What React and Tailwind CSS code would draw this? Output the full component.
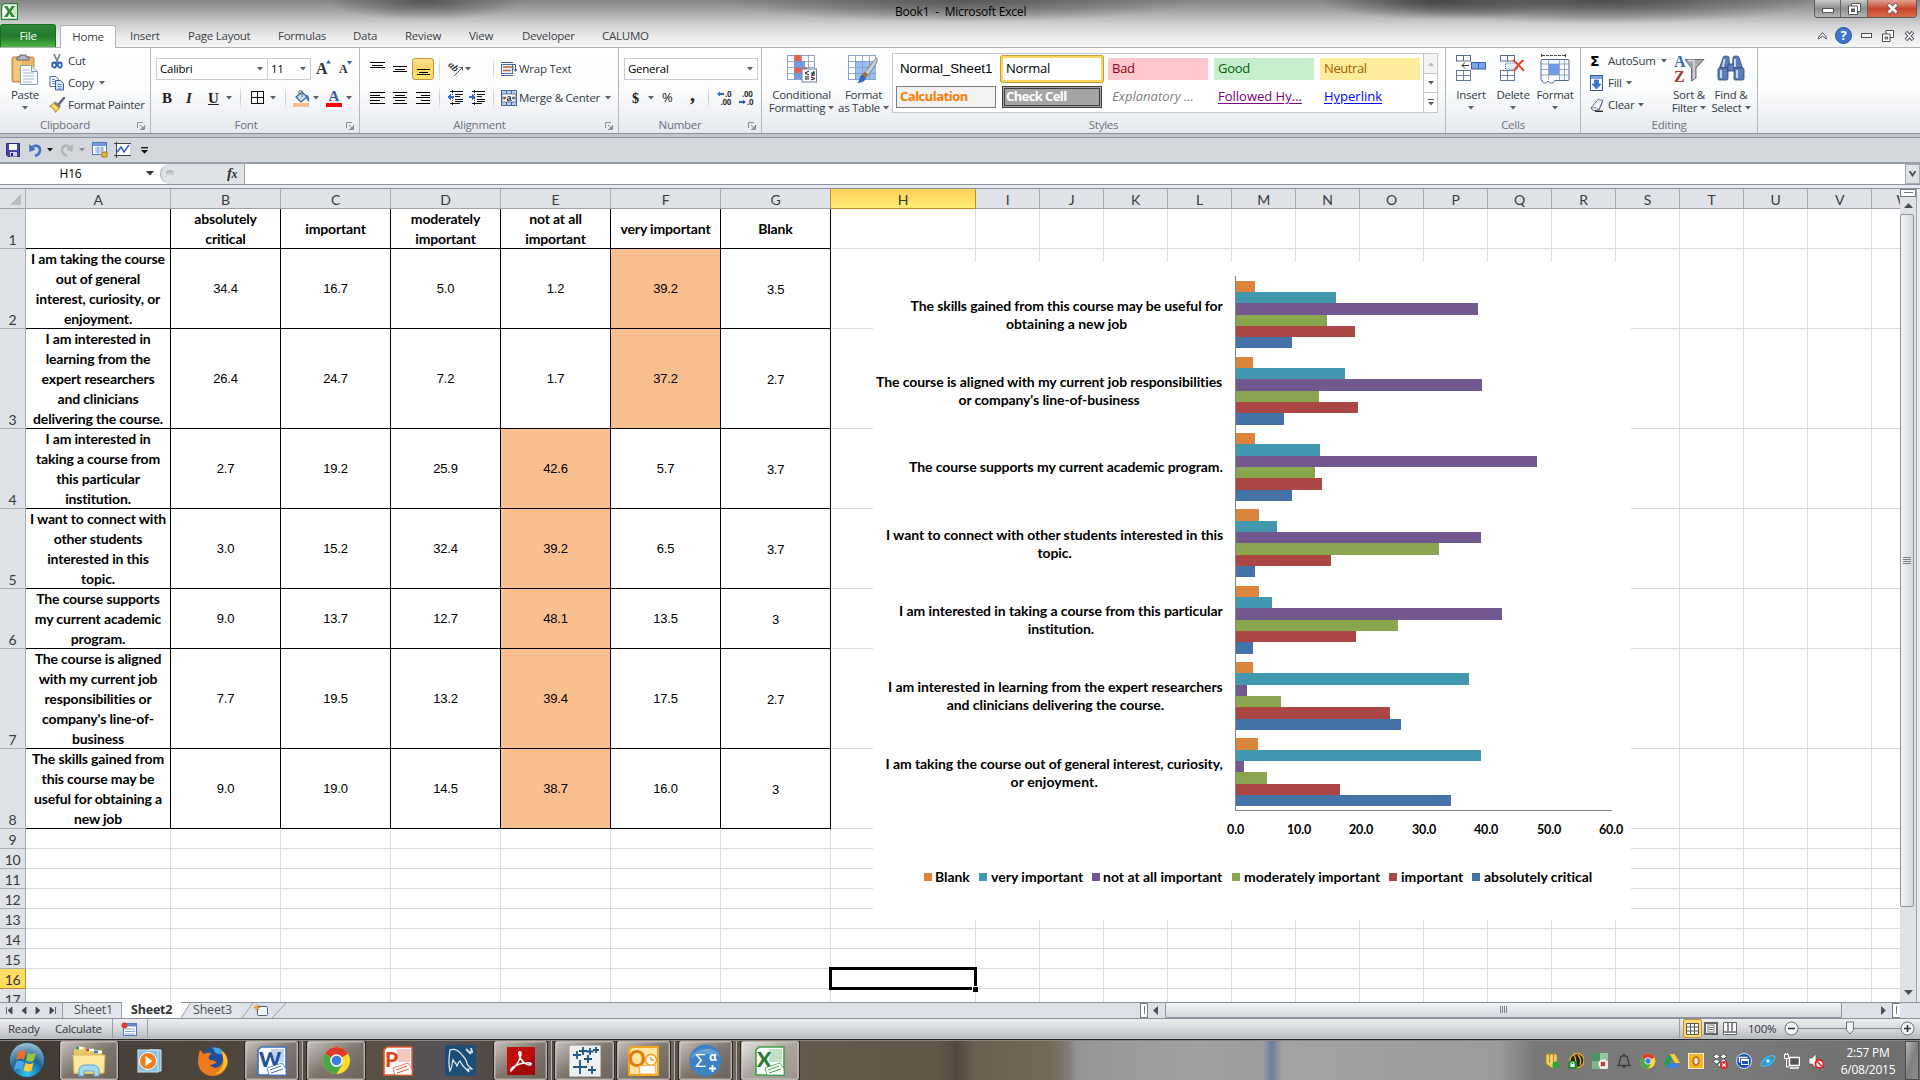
import React from "react";

const UI = "font-['Open_Sans','Noto_Sans',sans-serif] text-[11.5px] tracking-[-0.25px]";
const CAL = "font-['Lato',sans-serif]";

const Arrow = ({ c = "" }) => (
  <svg className={"w-[6px] h-[4px] shrink-0 " + c} viewBox="0 0 6 4"><path d="M0 0h6L3 3.600z" fill="#5b6068" /></svg>
);
const Sep = ({ c = "" }) => <div className={"w-px h-[22px] shrink-0 bg-gradient-to-b from-[#f0f1f3] via-[#c4c8ce] to-[#f0f1f3] " + c} />;

/* horizontal rules icon; each entry is [offset, width] */
const Lines = ({ rows, y = 0, c = "" }) => (
  <svg className={"w-[15px] h-[16px] shrink-0 " + c} viewBox="0 0 15 16" shapeRendering="crispEdges">
    {rows.map(([x, w], i) => <rect key={i} x={x} y={Math.round(y + i * 2.700)} width={w} height="1" fill="#000" />)}
  </svg>
);

const Launcher = () => (
  <svg className="w-[8px] h-[8px]" viewBox="0 0 8 8"><path d="M.5 6V.5H6M3 3l3 3M7.500 3v4.500H3" fill="none" stroke="#8a8f97" /><path d="M7.500 3.500v4h-4z" fill="#8a8f97" /></svg>
);

const Group = ({ label, w, children, launch, lp = "" }) => (
  <div className={"flex flex-col h-[85px] shrink-0 border-r border-[#b4b8be] bg-gradient-to-b from-white via-[#fbfcfc] to-[#e6e9ee] " + w}>
    <div className="h-[69px] flex flex-col">{children}</div>
    <div className={"h-[16px] relative flex items-center justify-center text-[#6b7280] " + lp}>
      <span>{label}</span>
      {launch && <span className="absolute right-[5px] top-[5px]"><Launcher /></span>}
    </div>
  </div>
);

const Big = ({ w, icon, a, b, arrow }) => (
  <div className={"flex flex-col items-center shrink-0 pt-[6px] text-[#333b46] leading-[13px] whitespace-nowrap " + w}>
    <div className="h-[34px] flex items-start justify-center">{icon}</div>
    <span>{a}</span>
    <span className="flex items-center gap-[3px] h-[13px]">{b}{arrow !== false && <Arrow />}</span>
  </div>
);

const PasteIcon = () => (
  <svg className="w-[30px] h-[31px]" viewBox="0 0 30 31">
    <rect x="2" y="3" width="22" height="25" rx="1.500" fill="#eab765" stroke="#b9853b" />
    <rect x="4" y="6" width="8" height="20" fill="#f6d08f" opacity=".7" />
    <path d="M7 6V3h3V1h6v2h3v3z" fill="#b5bac2" stroke="#5f666f" />
    <path d="M10.500 11.500h11l6 6v13h-17z" fill="#fdfeff" stroke="#8b9cb6" />
    <path d="M21.500 11.500v6h6" fill="#dfe8f4" stroke="#8b9cb6" />
    <path d="M13 16h6M13 19h11M13 22h11M13 25h11M13 28h9" stroke="#9db4d4" />
  </svg>
);
const CutIcon = () => (
  <svg className="w-[16px] h-[16px]" viewBox="0 0 16 16">
    <path d="M5 1l4 9M11 1L7 10" stroke="#72839b" strokeWidth="1.700" />
    <ellipse cx="5.200" cy="12" rx="2" ry="2.500" fill="none" stroke="#2f62b5" strokeWidth="1.800" />
    <ellipse cx="10.800" cy="12" rx="2" ry="2.500" fill="none" stroke="#2f62b5" strokeWidth="1.800" />
  </svg>
);
const CopyIcon = () => (
  <svg className="w-[16px] h-[16px]" viewBox="0 0 16 16">
    <path d="M1 1.500h6l2.500 2.500v7.500H1z" fill="#f4f8ff" stroke="#4c72b0" />
    <path d="M6.500 5.500h5l3 3v6.500h-8z" fill="#d6e4f8" stroke="#3559a0" />
    <path d="M3 4.500h3M3 6.500h3M3 8.500h3M8.500 9.500h4M8.500 11.500h4M8.500 13.200h4" stroke="#5c86c8" strokeWidth=".9" />
  </svg>
);
const PainterIcon = () => (
  <svg className="w-[16px] h-[16px]" viewBox="0 0 16 16">
    <path d="M15 1l-5 6" stroke="#6a5d8c" strokeWidth="2.600" strokeLinecap="round" />
    <path d="M6.500 4.500l5.500 5-1.500 1.500-6-5z" fill="#777c85" />
    <path d="M4.500 6l6 5-4 4.500C5 12.500 3 10 .5 9.500z" fill="#f2c443" stroke="#a77f20" strokeWidth=".7" />
    <path d="M4 8l4 4" stroke="#fff3b8" strokeWidth="1.200" />
  </svg>
);
const BucketIcon = () => (
  <svg className="w-[17px] h-[17px]" viewBox="0 0 17 17">
    <path d="M3 7l6-5 5 5-6 5z" fill="#c9daf2" stroke="#3f5f91" strokeWidth="1.200" /><path d="M6 4V1.500c0-1.500 3-1.500 3 0V7" fill="none" stroke="#3f5f91" />
    <path d="M13 4.500c3 1 3.500 4 3 7.500-1.500-1-2.500-3-3-4.500z" fill="#3c6fc4" /><rect x="0" y="13" width="16" height="4" fill="#fabf8f" />
  </svg>
);
const FontColor = () => (
  <div className="w-[16px] h-[17px] flex flex-col items-center leading-[13px] font-['Liberation_Serif',serif] font-bold text-[15px] text-[#3d5a94] tracking-normal">
    A<div className="w-full h-[4px] bg-[#ff0000] shrink-0" />
  </div>
);
const BorderIcon = () => (
  <svg className="w-[14px] h-[14px]" viewBox="0 0 14 14" shapeRendering="crispEdges"><path d="M.5.5h12v12H.5zM6.500 0v13M0 6.500h13" fill="none" stroke="#111" /></svg>
);
const WrapIcon = () => (
  <svg className="w-[16px] h-[16px]" viewBox="0 0 16 16">
    <path d="M0 1.500h12M0 14.500h12" stroke="#3d62a3" /><rect x=".5" y="3.500" width="11" height="9" fill="#eef4fc" stroke="#4a6eab" />
    <path d="M2 6h11M2 9.500h8" stroke="#b0663a" strokeWidth="1.300" /><path d="M12 3.500h2.500v6m-2-1.500l2 2.500 1.500-2.500" fill="none" stroke="#2f5ea8" />
  </svg>
);
const MergeIcon = () => (
  <svg className="w-[16px] h-[16px]" viewBox="0 0 16 16">
    <rect x=".5" y=".5" width="15" height="15" fill="#b9cdec" stroke="#46639a" /><path d="M5.500 0v4M10.500 0v4M5.500 12v4M10.500 12v4" stroke="#46639a" />
    <rect x="1" y="4" width="14" height="8" fill="#fff" stroke="#46639a" strokeWidth=".8" />
    <path d="M1.500 8h3M11.500 8h3M3 6.500L4.500 8 3 9.500M13 6.500L11.500 8 13 9.500" stroke="#222" fill="none" />
    <text x="5.400" y="10.700" fontSize="9" fontWeight="bold" fontFamily="Liberation Sans" fill="#222">a</text>
  </svg>
);
const OrientIcon = () => (
  <svg className="w-[16px] h-[16px] overflow-visible" viewBox="0 0 16 16">
    <text x="0" y="8" transform="rotate(45 4 6)" fontSize="10" letterSpacing="0" fontStyle="italic" fontFamily="Liberation Serif" fontWeight="bold" fill="#333">ab</text>
    <path d="M6 15L14.500 6.500M11.500 6.500h3v3" stroke="#555" fill="none" />
  </svg>
);
const Indent = ({ left, c }) => (
  <svg className={"w-[16px] h-[16px] shrink-0 " + c} viewBox="0 0 16 16" shapeRendering="crispEdges">
    {[1, 4, 6, 9, 11].map((y) => <rect key={y} x={y === 1 ? 3 : 8} y={y} width={y === 1 ? 13 : y === 6 ? 5 : 8} height="1" fill="#111" />)}
    <rect x="3" y="13" width="10" height="1" fill="#111" /><path d="M5.500 0v16" stroke="#333" strokeDasharray="1 1" />
    <path d={left ? "M0 7l4-3v2h3v2H4v2z" : "M7 7L3 4v2H0v2h3v2z"} fill="#2f6fc9" />
  </svg>
);
const DecIcon = ({ inc, c }) => (
  <svg className={"w-[16px] h-[16px] shrink-0 " + c} viewBox="0 0 16 16">
    <g fontFamily="Open Sans" fontWeight="bold" fontSize="8" fill="#333">
      {inc ? <><text x="8" y="7">.0</text><text x="3.500" y="14.500">.00</text></> : <><text x="3" y="7">.00</text><text x="8" y="14.500">.0</text></>}
    </g>
    <path d={inc ? "M0 4l3-2.500V3h4v2H3v1.500z" : "M7 12L4 9.500V11H0v2h4v1.500z"} fill="#2f62c4" />
  </svg>
);
const CFIcon = () => (
  <svg className="w-[30px] h-[29px]" viewBox="0 0 30 29">
    <rect x=".5" y="1.500" width="27" height="24" fill="#fff" stroke="#8da3c8" />
    <rect x="7" y="1" width="7" height="6" fill="#ef5b41" /><rect x="7" y="7" width="11" height="6" fill="#6e9ae8" /><rect x="7" y="13" width="13" height="6" fill="#ef5b41" /><rect x="7" y="19" width="7" height="6" fill="#6e9ae8" />
    <path d="M7.500 1v25M14.500 1v25M21.500 1v25M0 7.500h28M0 13.500h28M0 19.500h28" stroke="#7f95bd" strokeWidth=".8" />
    <rect x="15" y="15" width="14.500" height="13" fill="#fff" stroke="#6b7f9f" />
    <path d="M22 17l-4 2 4 2M18 23h4M18 25h4M24 19h4M24 21h4M27 17l-2 5M24 23l4 1.500-4 1.500" stroke="#111" fill="none" />
  </svg>
);
const FTIcon = () => (
  <svg className="w-[31px] h-[30px]" viewBox="0 0 31 30">
    <rect x=".5" y="1.500" width="27" height="24" fill="#fff" stroke="#8da3c8" /><rect x="7" y="7" width="21" height="18" fill="#9dbdf0" />
    <path d="M7.500 1v25M14.500 1v25M21.500 1v25M0 7.500h28M0 13.500h28M0 19.500h28" stroke="#7c98cb" strokeWidth=".8" />
    <path d="M29 4c2 3-6 14-9 17l-3-3c4-4 9-13 12-14z" fill="#c9ccd1" stroke="#70757d" strokeWidth=".8" />
    <path d="M17 18l3 3-2 3-4-3.500z" fill="#a86b2a" /><path d="M14 20.500l4 3.500c-1 4-6 5-9 5 3-2 2-6 5-8.500z" fill="#2f66c8" />
  </svg>
);
const Cell2 = ({ x, y, w = 14, h = 12 }) => (
  <g><rect x={x} y={y} width={w} height={h} fill="#fff" stroke="#566b8e" strokeWidth=".9" /><path d={`M${x + w / 2} ${y}v${h}M${x} ${y + h / 2}h${w}`} stroke="#566b8e" strokeWidth=".8" /></g>
);
const InsertIcon = () => (
  <svg className="w-[31px] h-[29px]" viewBox="0 0 31 29"><rect x=".5" y="1.500" width="14" height="5.500" fill="#fff" stroke="#566b8e" /><path d="M7.500 1.500v5.500" stroke="#566b8e" />
    <Cell2 x={0.5} y={16.500} w={14} h={10} /><rect x="15.500" y="8.500" width="14" height="6.500" fill="#7ba4ea" stroke="#3b5fa8" /><path d="M22.500 8.500v6.500" stroke="#3b5fa8" />
    <path d="M6 11.500h7M9 8.500l-3 3 3 3" stroke="#333" fill="none" /></svg>
);
const DeleteIcon = () => (
  <svg className="w-[26px] h-[29px]" viewBox="0 0 26 29"><rect x=".5" y="1.500" width="14" height="5.500" fill="#fff" stroke="#566b8e" /><path d="M7.500 1.500v5.500" stroke="#566b8e" />
    <Cell2 x={0.5} y={16.500} w={14} h={10} /><rect x="5.500" y="9" width="12" height="6" fill="#e8f0fc" stroke="#3b5fa8" strokeDasharray="1 1" />
    <path d="M13 6c4 3 8 7 11 11M23.500 6c-4 3-7 7-9.500 11" stroke="#ee3a22" strokeWidth="2" fill="none" /></svg>
);
const FormatIcon = () => (
  <svg className="w-[31px] h-[31px]" viewBox="0 0 31 31"><path d="M2 1.500h23M1.500 0v3M25.500 0v3" stroke="#444" strokeDasharray="3 1" />
    <rect x="1" y="5.500" width="28" height="21" rx="1" fill="#f7faff" stroke="#566b8e" /><rect x="9" y="10" width="10" height="11" fill="#6f9bea" />
    <path d="M8.500 5v21M19.500 5v21M24.500 5v21M1 10h28M1 15.500h28M1 21h28" stroke="#8197ba" strokeWidth=".8" /><path d="M2 26c0 4 5 4 6 1 1 3 7 3 7-1" fill="#fff" stroke="#566b8e" /></svg>
);
const SortIcon = () => (
  <svg className="w-[31px] h-[30px]" viewBox="0 0 31 30">
    <text x="0" y="13" fontFamily="Liberation Serif" fontWeight="bold" fontSize="16" fill="#3a66b3">A</text>
    <text x="0" y="28" fontFamily="Liberation Serif" fontWeight="bold" fontSize="16" fill="#a33a35">Z</text>
    <path d="M11 5.500h19l-8 8.500v10l-4.500 3V14z" fill="#a4a7ab" stroke="#6d7176" /><path d="M14 6.500h6l0 8v10" stroke="#dcdee0" fill="none" strokeWidth="1.500" />
  </svg>
);
const FindIcon = () => (
  <svg className="w-[28px] h-[29px]" viewBox="0 0 28 29">
    <g fill="#5d7fb8" stroke="#2c4876" strokeWidth=".8">
      <path d="M6 3.500c0-2 6-2 6 0l.5 10.500H2.500z" /><path d="M16 3.500c0-2 6-2 6 0L25.500 14h-10z" />
      <rect x="1" y="14" width="10" height="12" rx="1.500" /><rect x="17" y="14" width="10" height="12" rx="1.500" /><rect x="11" y="10" width="6" height="7" />
    </g>
    <path d="M7.500 5L6 13M18 5v8M4 16v8M20 16v8" stroke="#c8d9f3" strokeWidth="2" />
  </svg>
);
const FillIcon = () => (
  <svg className="w-[13px] h-[16px]" viewBox="0 0 13 16"><rect x=".5" y=".5" width="12" height="15" fill="#fff" stroke="#3c5a96" /><rect x="1" y="1" width="11" height="3" fill="#7ba4ea" /><path d="M4.500 5h4v4h2.500l-4.500 5L2 9h2.500z" fill="#3b74d6" stroke="#2450a0" strokeWidth=".6" /></svg>
);
const ClearIcon = () => (
  <svg className="w-[14px] h-[14px]" viewBox="0 0 14 14"><path d="M8 1.500l5 1-4 9.500-6 .5-2-2.500z" fill="#f4f6fa" stroke="#5d6b85" /><path d="M1 10l5-.5 2.500 2.500L13 2.500" stroke="#5d6b85" fill="none" strokeWidth=".8" /><path d="M5 13.300h8" stroke="#222" strokeWidth="1.300" /></svg>
);

function TitleBar() {
  return (
    <div className="h-[24px] flex items-start">
      <svg className="w-[17px] h-[17px] mt-[3px] ml-px" viewBox="0 0 17 17">
        <path d="M3 .5h13.500v16H.5V3z" fill="#f3f9f1" stroke="#2a7d35" strokeWidth="1.300" /><rect x="10" y="3" width="5" height="11" fill="#cfe6cb" />
        <path d="M3 3h3.500l2 3.500L10.500 3H14l-4 5.500L14 14h-3.500L8.500 10.500 6.500 14H3l3.800-5.500z" fill="#2c8a3a" />
      </svg>
      <div className="mt-[3px] ml-[877px] flex-1 leading-[18px] text-[12px] tracking-[-0.2px] text-black whitespace-pre">Book1  -  Microsoft Excel</div>
      <div className="flex w-[103px] h-[18px] mr-[3px] border border-t-0 border-[#5a5a5a] rounded-b-[4px] overflow-hidden">
        <div className="w-[26px] bg-gradient-to-b from-[#c9c9c9] via-[#8e8e8e] to-[#b5b5b5] border-r border-[#636363] flex items-end justify-center pb-[4px]"><div className="w-[12px] h-[5px] bg-white border border-[#555]" /></div>
        <div className="w-[27px] bg-gradient-to-b from-[#c9c9c9] via-[#8e8e8e] to-[#b5b5b5] border-r border-[#636363] flex items-center justify-center">
          <svg className="w-[13px] h-[12px]" viewBox="0 0 13 12"><path d="M3.500.5h9v8h-9z" fill="#fff" stroke="#555" /><path d="M.5 3h9v8.500h-9z" fill="#fff" stroke="#555" /><rect x="3.500" y="6" width="3" height="2.500" fill="#777" stroke="#555" /></svg>
        </div>
        <div className="flex-1 bg-gradient-to-b from-[#e0a193] via-[#c8432a] to-[#d9694a] flex items-center justify-center">
          <svg className="w-[13px] h-[11px]" viewBox="0 0 13 11"><path d="M2 1l9 9M11 1l-9 9" stroke="#555" strokeWidth="4" /><path d="M2.500 1.500l8 8M10.500 1.500l-8 8" stroke="#fff" strokeWidth="2.600" /></svg>
        </div>
      </div>
    </div>
  );
}

function TabBar() {
  return (
    <div className="h-[24px] flex items-end text-[#3b3f45] border-b border-[#b0b3b8]">
      <div className="w-[56px] h-[23px] rounded-t-[3px] border border-b-0 border-[#1d6a2a] bg-gradient-to-b from-[#2d8a36] via-[#1f7a2c] to-[#4fb344] text-white flex items-center justify-center">File</div>
      <div className="w-[56px] h-[23px] ml-[4px] -mb-px rounded-t-[3px] border border-b-0 border-[#b0b3b8] bg-white flex items-center justify-center">Home</div>
      <div className="flex h-[23px] items-center ml-[14px] whitespace-nowrap flex-1">
        <span className="w-[58px]">Insert</span><span className="w-[90px]">Page Layout</span><span className="w-[75px]">Formulas</span><span className="w-[52px]">Data</span>
        <span className="w-[64px]">Review</span><span className="w-[53px]">View</span><span className="w-[80px]">Developer</span><span>CALUMO</span>
      </div>
      <div className="flex items-center h-[23px] gap-[8px] pr-[5px]">
        <svg className="w-[9px] h-[8px]" viewBox="0 0 9 8"><path d="M4.500 0.700L8.300 5v2L4.500 4 .7 7V5z" fill="#fff" stroke="#4a4f57" /></svg>
        <svg className="w-[17px] h-[17px]" viewBox="0 0 17 17"><circle cx="8.500" cy="8.500" r="8" fill="#3f74cc" stroke="#2a539c" /><text x="8.500" y="13" textAnchor="middle" fontSize="13" fontWeight="bold" fontFamily="Open Sans" fill="#fff">?</text></svg>
        <div className="w-[11px] h-[5px] bg-white border border-[#4a4f57] ml-px" />
        <svg className="w-[12px] h-[12px] ml-[2px]" viewBox="0 0 12 12"><path d="M4 .5h7.500v7H4z" fill="#fff" stroke="#4a4f57" /><path d="M.5 4H8v7.500H.5z" fill="#fff" stroke="#4a4f57" /><path d="M3 7h2.500v2H3z" stroke="#4a4f57" fill="none" /></svg>
        <svg className="w-[11px] h-[10px] ml-[2px]" viewBox="0 0 11 10"><path d="M2 1l7 8M9 1L2 9" stroke="#4a4f57" strokeWidth="3.600" /><path d="M2.400 1.500l6.200 7M8.600 1.500l-6.200 7" stroke="#fff" strokeWidth="1.600" /></svg>
      </div>
    </div>
  );
}

function Ribbon() {
  return (
    <div className="h-[85px] flex bg-gradient-to-b from-white via-[#fbfcfc] to-[#e6e9ee] text-[#333b46]">
      <Group label="Clipboard" w="w-[151px]" lp="pr-[20px]" launch>
        <div className="flex">
          <Big w="w-[50px]" icon={<PasteIcon />} a="Paste" b="" />
          <div className="flex flex-col pt-[2px] -ml-px">
            <div className="h-[22px] flex items-center gap-[3px]"><CutIcon /><span>Cut</span></div>
            <div className="h-[22px] flex items-center gap-[3px]"><CopyIcon /><span>Copy</span><Arrow c="ml-[2px]" /></div>
            <div className="h-[22px] flex items-center gap-[3px] whitespace-nowrap"><PainterIcon /><span>Format Painter</span></div>
          </div>
        </div>
      </Group>
      <Group label="Font" w="w-[209px]" lp="pr-[18px]" launch>
        <div className="flex items-center mt-[10px] h-[22px] ml-[5px] text-black">
          <div className="w-[112px] h-[22px] border border-[#c9cdd3] bg-white flex items-center justify-between pl-[3px] pr-[4px]">Calibri<Arrow /></div>
          <div className="w-[43px] h-[22px] border border-l-0 border-[#c9cdd3] bg-white flex items-center justify-between pl-[3px] pr-[4px]">11<Arrow /></div>
          <span className="ml-[5px] w-[14px] flex text-[#333] font-['Liberation_Serif',serif] font-bold text-[16px] tracking-normal leading-[22px]">A<svg className="w-[5px] h-[4px] mt-[2px] -ml-[2px] shrink-0" viewBox="0 0 5 4"><path d="M0 3.500L2.500 0 5 3.500z" fill="#2f5ea8" /></svg></span>
          <span className="ml-[9px] w-[14px] flex text-[#333] font-['Liberation_Serif',serif] font-bold text-[12px] tracking-normal leading-[26px]">A<svg className="w-[5px] h-[4px] mt-[5px] -ml-px shrink-0" viewBox="0 0 5 4"><path d="M0 0h5L2.500 3.500z" fill="#2f5ea8" /></svg></span>
        </div>
        <div className="flex items-center mt-[7px] h-[22px] text-[#222] font-['Liberation_Serif',serif] text-[15px] tracking-normal">
          <b className="ml-[11px] w-[11px]">B</b><b className="ml-[13px] w-[10px] italic">I</b><b className="ml-[12px] w-[11px] underline">U</b><Arrow c="ml-[7px]" />
          <Sep c="ml-[8px]" /><span className="ml-[10px] w-[14px]"><BorderIcon /></span><Arrow c="ml-[5px]" /><Sep c="ml-[9px]" />
          <span className="ml-[7px] w-[16px]"><BucketIcon /></span><Arrow c="ml-[4px]" /><span className="ml-[7px] w-[16px]"><FontColor /></span><Arrow c="ml-[4px]" />
        </div>
      </Group>
      <Group label="Alignment" w="w-[259px]" lp="pr-[19px]" launch>
        <div className="flex items-center mt-[10px] h-[22px] whitespace-nowrap">
          <Lines c="ml-[10px]" y={1} rows={[[0, 15], [2, 11], [0, 15]]} /><Lines c="ml-[8px]" y={5} rows={[[0, 14], [2, 10], [0, 14]]} />
          <div className="ml-[4px] w-[22px] h-[22px] rounded-[3px] border border-[#c29a45] bg-gradient-to-b from-[#fde08a] via-[#fcd565] to-[#ffe375] flex items-center justify-center"><Lines y={8} rows={[[1, 13], [3, 9], [1, 13]]} /></div>
          <Sep c="ml-[5px]" /><span className="ml-[8px]"><OrientIcon /></span><Arrow c="ml-[1px]" /><Sep c="ml-[22px]" />
          <span className="ml-[7px]"><WrapIcon /></span><span className="ml-[2px]">Wrap Text</span>
        </div>
        <div className="flex items-center mt-[7px] h-[22px] whitespace-nowrap">
          <Lines c="ml-[10px]" y={2} rows={[[0, 15], [0, 10], [0, 15], [0, 10], [0, 15]]} /><Lines c="ml-[8px]" y={2} rows={[[0, 14], [2, 10], [0, 14], [2, 10], [0, 14]]} /><Lines c="ml-[8px]" y={2} rows={[[0, 14], [5, 9], [0, 14], [5, 9], [0, 14]]} />
          <Sep c="ml-[8px]" /><Indent left c="ml-[7px]" /><Indent c="ml-[6px]" /><Sep c="ml-[8px]" />
          <span className="ml-[7px]"><MergeIcon /></span><span className="ml-[2px] w-[84px]">Merge &amp; Center</span><Arrow c="ml-[2px]" />
        </div>
      </Group>
      <Group label="Number" w="w-[143px]" lp="pr-[20px]" launch>
        <div className="mt-[10px] ml-[5px] w-[134px] h-[22px] border border-[#c9cdd3] bg-white flex items-center justify-between pl-[3px] pr-[4px] text-black">General<Arrow /></div>
        <div className="flex items-center mt-[7px] h-[22px]">
          <b className="ml-[13px] w-[10px] text-[14px] text-[#222] font-['Liberation_Serif',serif]">$</b><Arrow c="ml-[6px]" /><span className="ml-[8px] w-[14px] text-[13px] text-[#222]">%</span>
          <b className="ml-[14px] w-[7px] -mt-[8px] text-[20px] leading-[16px] font-['Liberation_Serif',serif] text-[#222]">,</b><Sep c="ml-[11px]" /><DecIcon inc c="ml-[8px]" /><DecIcon c="ml-[6px]" />
        </div>
      </Group>
      <Group label="Styles" w="w-[684px]">
        <div className="flex">
          <Big w="w-[75px] ml-[2px]" icon={<CFIcon />} a="Conditional" b="Formatting" /><Big w="w-[49px]" icon={<FTIcon />} a="Format" b="as Table" />
          <div className="ml-[4px] mt-[5px] w-[546px] h-[60px] border border-[#c3c7cd] bg-white flex justify-between">
            <div className="grid grid-cols-[repeat(5,100px)] grid-rows-[22px_22px] gap-x-[6px] gap-y-[6px] pt-[4px] pl-[3px]">
              <div className="h-[22px] flex items-center px-[4px] font-['Liberation_Sans',sans-serif] text-[13.3px] tracking-normal text-black">Normal_Sheet1</div>
              <div className="-mx-[2px] -my-[3px] border-[3px] border-[#fbd75f] outline outline-1 -outline-offset-1 outline-[#c99a35] rounded-[3px] pl-[3px] flex items-center text-[13px] text-black">Normal</div>
              <div className="h-[22px] flex items-center px-[4px] text-[13px] bg-[#ffc7ce] text-[#9c0006]">Bad</div>
              <div className="h-[22px] flex items-center px-[4px] text-[13px] bg-[#c6efce] text-[#006100]">Good</div>
              <div className="h-[22px] flex items-center px-[4px] text-[13px] tracking-[-0.4px] bg-[#ffeb9c] text-[#9c6500]">Neutral</div>
              <div className="h-[22px] flex items-center px-[3px] font-bold text-[13px] tracking-[-0.5px] bg-[#f2f2f2] border border-[#7f7f7f] text-[#fa7d00]">Calculation</div>
              <div className="h-[22px] flex items-center px-px font-bold text-[13px] tracking-[-0.6px] bg-[#a5a5a5] border-[3px] border-double border-[#3f3f3f] text-white whitespace-nowrap">Check Cell</div>
              <div className="h-[22px] flex items-center px-[4px] text-[13px] tracking-[0px] italic text-[#7f7f7f] whitespace-nowrap">Explanatory ...</div>
              <div className="h-[22px] flex items-center px-[4px] text-[13px] tracking-[0px] underline underline-offset-2 text-[#800080] whitespace-nowrap">Followed Hy...</div>
              <div className="h-[22px] flex items-center px-[4px] text-[13px] tracking-[0px] underline underline-offset-2 text-[#0000ff]">Hyperlink</div>
            </div>
            <div className="w-[14px] border-l border-[#c3c7cd] flex flex-col">
              <div className="h-[20px] flex items-center justify-center border-b border-[#c3c7cd] bg-[#f3f4f6]"><Arrow c="rotate-180 opacity-40" /></div>
              <div className="h-[19px] flex items-center justify-center border-b border-[#c3c7cd]"><Arrow /></div>
              <div className="flex-1 flex flex-col gap-[2px] items-center justify-center"><div className="w-[6px] h-px bg-[#5b6068]" /><Arrow /></div>
            </div>
          </div>
        </div>
      </Group>
      <Group label="Cells" w="w-[135px]">
        <div className="flex pl-[4px]"><Big w="w-[42px]" icon={<InsertIcon />} a="Insert" b="" /><Big w="w-[42px]" icon={<DeleteIcon />} a="Delete" b="" /><Big w="w-[42px]" icon={<FormatIcon />} a="Format" b="" /></div>
      </Group>
      <Group label="Editing" w="w-[177px]">
        <div className="flex pl-[9px]">
          <div className="w-[81px] flex flex-col pt-[2px]">
            <div className="h-[22px] flex items-center"><b className="w-[18px] text-[14px] text-black font-['DejaVu_Sans',sans-serif]">Σ</b>AutoSum<Arrow c="ml-[5px]" /></div>
            <div className="h-[22px] flex items-center"><span className="w-[18px]"><FillIcon /></span>Fill<Arrow c="ml-[4px]" /></div>
            <div className="h-[22px] flex items-center"><span className="w-[18px]"><ClearIcon /></span>Clear<Arrow c="ml-[4px]" /></div>
          </div>
          <Big w="w-[38px] -ml-px" icon={<SortIcon />} a="Sort &amp;" b="Filter" /><Big w="w-[42px] ml-[2px]" icon={<FindIcon />} a="Find &amp;" b="Select" />
        </div>
      </Group>
    </div>
  );
}

function QuickAccess() {
  return (
    <div className="h-[24px] flex items-center bg-[#d4d8dd] pl-[6px]">
      <svg className="w-[14px] h-[14px]" viewBox="0 0 14 14"><path d="M.5.5h13v13H2L.5 12z" fill="#4548a8" stroke="#2c2e7c" /><rect x="3" y="1" width="8" height="6" fill="#f4f7ff" /><rect x="4" y="9" width="7" height="4.500" fill="#cdd2e8" /><rect x="5" y="10" width="2" height="3" fill="#22245e" /></svg>
      <svg className="w-[14px] h-[14px] ml-[8px]" viewBox="0 0 14 14"><path d="M3 6c3-5 9-4 9 1 0 3-2 5-5 6" fill="none" stroke="#3f6fc6" strokeWidth="2.600" /><path d="M1 1l.5 8 6-2.500z" fill="#3f6fc6" /></svg>
      <svg className="w-[6px] h-[4px] ml-[5px]" viewBox="0 0 6 4"><path d="M0 0h6L3 3.500z" fill="#111" /></svg>
      <svg className="w-[14px] h-[14px] ml-[7px]" viewBox="0 0 14 14"><path d="M11 6C8 1 2 2 2 7c0 3 2 5 5 6" fill="none" stroke="#b0b4ba" strokeWidth="2.400" /><path d="M13 1l-.5 8-6-2.500z" fill="#b0b4ba" /></svg>
      <svg className="w-[6px] h-[4px] ml-[5px]" viewBox="0 0 6 4"><path d="M0 0h6L3 3.500z" fill="#8c9096" /></svg>
      <svg className="w-[16px] h-[16px] ml-[7px]" viewBox="0 0 16 16"><rect x=".5" y=".5" width="14" height="12" fill="#fff" stroke="#4f78b8" /><rect x="1" y="1" width="13" height="3" fill="#6e9ae0" /><path d="M3 6h9M3 8h9M3 10h6M6 4v8M10 4v8" stroke="#7fa3d8" /><path d="M10 10h5v5h-5z" fill="#e9b93a" stroke="#a67a16" /></svg>
      <svg className="w-[17px] h-[16px] ml-[6px]" viewBox="0 0 17 16"><rect x="2" y="1" width="14" height="12" fill="#fff" /><path d="M2.500 0v16M0 13.500h17M0 1.500h17" stroke="#444" /><path d="M3 10l4-5 3 5 5-7" fill="none" stroke="#2c5fc0" strokeWidth="1.500" /></svg>
      <svg className="w-[8px] h-[7px] ml-[10px] mt-[2px]" viewBox="0 0 8 7"><path d="M0 .7h7" stroke="#111" strokeWidth="1.300" /><path d="M0 3h7L3.500 6.800z" fill="#111" /></svg>
    </div>
  );
}

function FormulaBar() {
  return (
    <div className="h-[20px] flex bg-white">
      <div className="w-[160px] flex items-center text-black text-[12px]"><span className="w-[141px] text-center mt-px">H16</span><svg className="w-[8px] h-[5px] ml-[5px]" viewBox="0 0 8 5"><path d="M0 0h8L4 4.600z" fill="#333" /></svg></div>
      <div className="w-[85px] flex items-center rounded-l-full bg-[#dfe2e7] border-l border-r border-[#9fa5ad] pl-[5px]">
        <div className="w-[8px] h-[8px] rounded-full bg-gradient-to-b from-[#a9adb3] to-[#f1f2f4]" />
        <span className="ml-[53px] font-['Liberation_Serif',serif] italic font-bold text-[15px] tracking-[-0.5px] leading-[16px] text-[#333]">f<span className="text-[12px]">x</span></span>
      </div>
      <div className="flex-1" />
      <div className="w-[15px] border border-[#a6abb2] bg-[#dfe2e7] flex items-center justify-center"><svg className="w-[7px] h-[6px]" viewBox="0 0 7 6"><path d="M.5 0l3 4.500L6.500 0" fill="none" stroke="#444" strokeWidth="1.700" /></svg></div>
    </div>
  );
}

const COLS = [["A", "w-[145px]"], ["B", "w-[110px]"], ["C", "w-[110px]"], ["D", "w-[110px]"], ["E", "w-[110px]"], ["F", "w-[110px]"], ["G", "w-[110px]"], ["H", "w-[145px]"],
  ..."IJKLMNOPQRSTUVW".split("").map((l) => [l, "w-[64px]"])];
const ROWS = [
  { h: "h-[40px]", head: true, cells: [[], ["absolutely", "critical"], ["important"], ["moderately", "important"], ["not at all", "important"], ["very important"], ["Blank"]] },
  { h: "h-[80px]", label: ["I am taking the course", "out of general", "interest, curiosity, or", "enjoyment."], v: ["34.4", "16.7", "5.0", "1.2", "39.2", "3.5"], hi: 4 },
  { h: "h-[100px]", label: ["I am interested in", "learning from the", "expert researchers", "and clinicians", "delivering the course."], v: ["26.4", "24.7", "7.2", "1.7", "37.2", "2.7"], hi: 4 },
  { h: "h-[80px]", label: ["I am interested in", "taking a course from", "this particular", "institution."], v: ["2.7", "19.2", "25.9", "42.6", "5.7", "3.7"], hi: 3 },
  { h: "h-[80px]", label: ["I want to connect with", "other students", "interested in this", "topic."], v: ["3.0", "15.2", "32.4", "39.2", "6.5", "3.7"], hi: 3 },
  { h: "h-[60px]", label: ["The course supports", "my current academic", "program."], v: ["9.0", "13.7", "12.7", "48.1", "13.5", "3"], hi: 3 },
  { h: "h-[100px]", label: ["The course is aligned", "with my current job", "responsibilities or", "company's line-of-", "business"], v: ["7.7", "19.5", "13.2", "39.4", "17.5", "2.7"], hi: 3 },
  { h: "h-[80px]", label: ["The skills gained from", "this course may be", "useful for obtaining a", "new job"], v: ["9.0", "19.0", "14.5", "38.7", "16.0", "3"], hi: 3 },
  ...Array.from({ length: 9 }, () => ({ h: "h-[20px]" })),
];

const SERIES = [["#db843d", 924, 935, 34.5, "Blank"], ["#4198af", 979, 991, 92, "very important"], ["#71588f", 1092, 1103, 119, "not at all important"], ["#89a54e", 1232, 1244, 136, "moderately important"], ["#aa4643", 1389, 1401, 62, "important"], ["#4572a7", 1472, 1484, 108, "absolutely critical"]];
const LABELS = [
  [306.500, [910.500, 312], ["The skills gained from this course may be useful for", "obtaining a new job"], 121],
  [382.500, [876, 346], ["The course is aligned with my current job responsibilities", "or company's line-of-business"], 181],
  [467, [909, 313.500], ["The course supports my current academic program."], 0],
  [535.500, [886, 337], ["I want to connect with other students interested in this", "topic."], 34],
  [611.500, [899, 323.500], ["I am interested in taking a course from this particular", "institution."], 66],
  [687.500, [888, 334.500], ["I am interested in learning from the expert researchers", "and clinicians delivering the course."], 217],
  [764.500, [885.500, 337], ["I am taking the course out of general interest, curiosity,", "or enjoyment."], 87],
];

function Chart() {
  const data = [7, 6, 5, 4, 3, 2, 1].map((r) => ROWS[r].v.map(Number));
  return (
    <svg className="absolute left-[873px] top-[73px] w-[758px] h-[658px] bg-white" viewBox="873 262 758 658">
      <g shapeRendering="crispEdges">
        {data.map((v, g) => [5, 4, 3, 2, 1, 0].map((s, k) => {
          const y0 = Math.round(280.600 + g * 76.290 + k * 11.300), y1 = Math.round(280.600 + g * 76.290 + (k + 1) * 11.300);
          return <rect key={g + "-" + k} x="1236" y={y0} width={Math.round(v[s] * 6.250)} height={y1 - y0} fill={SERIES[k][0]} />;
        }))}
        <rect x="1235" y="276" width="1" height="535" fill="#868686" /><rect x="1235" y="810" width="377" height="1" fill="#868686" />
      </g>
      <g fontFamily="Lato" fontWeight="bold" fontSize="14" fill="#000">
        {LABELS.map(([y, [x, w], t, w2]) => (
          <g key={t[0]}><text x={x} y={y + 4.500} textLength={w}>{t[0]}</text>{t[1] && <text x={x + (w - w2) / 2} y={y + 22.500} textLength={w2}>{t[1]}</text>}</g>
        ))}
        {SERIES.map(([c, sx, tx, w, t]) => <g key={t}><rect x={sx} y="873" width="8" height="8" fill={c} /><text x={tx} y="882" textLength={w}>{t}</text></g>)}
      </g>
      <g fontFamily="Lato" fontWeight="bold" fontSize="12.500" fill="#000">
        {[1235.500, 1299, 1361, 1424, 1486, 1549, 1611].map((x, i) => <text key={x} x={x - (i ? 12 : 8.500)} y="833.500" textLength={i ? 24 : 17}>{i * 10 + ".0"}</text>)}
      </g>
    </svg>
  );
}

function Sheet() {
  return (
    <div className="flex h-[813px] bg-[#dfe2e7]">
      <div className={"relative w-[1900px] h-[813px] overflow-hidden bg-white " + CAL}>
        <div className="flex h-[20px] w-[2000px] bg-[#dfe2e7] border-b border-[#9ea3ab] text-[#3a3a3a] text-[14px]">
          <div className="w-[26px] border-r border-[#a9adb4] flex items-end justify-end pr-[4px] pb-[3px]"><svg className="w-[11px] h-[11px]" viewBox="0 0 11 11"><path d="M11 0v11H0z" fill="#b9bdc4" /></svg></div>
          {COLS.map(([l, w]) => <div key={l} className={w + " shrink-0 flex items-center justify-center pt-[2px] border-r " + (l === "H" ? "bg-gradient-to-b from-[#ffd25a] to-[#ffec76] border-[#c28a30] shadow-[0_1px_0_#c28a30,-1px_0_0_#c28a30]" : l === "G" ? "border-[#c28a30]" : "border-[#a9adb4]")}>{l}</div>)}
        </div>
        {ROWS.map((r, i) => (
          <div key={i} className={"flex w-[2000px] " + r.h}>
            <div className={"w-[26px] shrink-0 border-r border-b flex items-end justify-center text-[14px] leading-[17px] tracking-[-0.3px] text-[#3a3a3a] " + (i === 15 ? "bg-[#ffdc62] border-[#c28a30]" : "bg-[#dfe2e7] border-[#a9adb4]")}>{i + 1}</div>
            {COLS.map(([l, w], c) => {
              const table = i < 8 && c < 7;
              const head = r.head ? table && r.cells[c] : c === 0 && r.label;
              const val = r.v && c > 0 && c < 7 ? r.v[c - 1] : null;
              return (
                <div key={l} className={w + " shrink-0 border-r border-b flex flex-col items-center justify-center text-black whitespace-nowrap " + (table ? "border-black " : "border-[#dadcdd] ") + (val && c - 1 === r.hi ? "bg-[#fabf8f]" : "")}>
                  {head && head.map((t) => <span key={t} className="h-[20px] leading-[21px] font-bold text-[14px] tracking-[-0.15px]">{t}</span>)}
                  {val && <span className={"mt-[2px] font-['Liberation_Sans',sans-serif] text-[13px] leading-[16px] " + (c === 6 ? "pt-px tracking-[-0.3px]" : "tracking-[-0.25px]")}>{val}</span>}
                </div>
              );
            })}
          </div>
        ))}
        <Chart />
        <div className="absolute left-[829px] top-[778px] w-[148px] h-[23px] border-[3px] border-black" />
        <div className="absolute left-[972px] top-[797px] w-[6px] h-[6px] bg-black border-l border-t border-white" />
      </div>
      <div className="w-[16px] flex flex-col bg-[#dfe2e7]">
        <div className="h-[8px] border border-[#777c84] bg-white flex items-center justify-center"><div className="w-[9px] h-px bg-[#777]" /></div>
        <div className="h-[17px] flex items-center justify-center"><svg className="w-[9px] h-[5px]" viewBox="0 0 9 5"><path d="M0 5L4.500 0 9 5z" fill="#4b5057" /></svg></div>
        <div className="h-[693px] w-[14px] rounded-[2px] border border-[#8f959e] bg-gradient-to-r from-[#f2f4f7] to-[#d5d9de] flex flex-col items-center justify-center gap-px">
          <div className="w-[8px] h-px bg-[#7a8088]" /><div className="w-[8px] h-px bg-[#7a8088]" /><div className="w-[8px] h-px bg-[#7a8088]" /><div className="w-[8px] h-px bg-[#7a8088]" />
        </div>
        <div className="flex-1" />
        <div className="h-[18px] flex items-center justify-center"><svg className="w-[9px] h-[5px]" viewBox="0 0 9 5"><path d="M0 0h9L4.500 5z" fill="#4b5057" /></svg></div>
      </div>
      <div className="w-[4px] bg-[#e9ebee] border-l border-[#9ea3ab]" />
    </div>
  );
}

function SheetTabs() {
  return (
    <div className="h-[17px] flex items-stretch border-t border-b border-[#8b929c] bg-[#dde1e8] text-[#4a4f57]">
      <svg className="w-[62px] h-[15px]" viewBox="0 0 62 15"><path d="M6.500 4v7M12 4L8 7.500 12 11zM26 4l-4 3.500 4 3.500zM36 4l4 3.500-4 3.500zM50 4l4 3.500-4 3.500zM55.500 4v7" fill="#41474f" stroke="#41474f" strokeWidth=".8" /></svg>
      <div className="w-[60px] border-l border-r border-[#9aa1ab] bg-[#e3e6eb] flex items-center pl-[11px] pt-px text-[12.5px] tracking-[-0.2px]">Sheet1</div>
      <div className="w-[59px] bg-white flex items-center pl-[9px] pt-px font-bold tracking-[-0.2px] text-[12.5px] text-[#333] -mt-px">Sheet2</div>
      <svg className="w-[9px] h-[15px] bg-white" viewBox="0 0 9 15"><path d="M9 0L0 15h9z" fill="#e3e6eb" /><path d="M9 0L0 15" stroke="#9aa1ab" /></svg>
      <div className="w-[51px] bg-[#e3e6eb] flex items-center pl-[3px] pt-px text-[12.5px] tracking-[-0.2px]">Sheet3</div>
      <svg className="w-[46px] h-[15px]" viewBox="0 0 46 15"><path d="M12 0L1 15M45 0L31 15" stroke="#9aa1ab" /><rect x="16.500" y="3.500" width="10" height="9" rx="1" fill="#f4f7fc" stroke="#4d6187" /><path d="M16 1v7M12.500 4.500h7M13.500 2l5 5M18.500 2l-5 5" stroke="#e39a24" /></svg>
      <div className="flex-1" />
      <div className="w-[8px] border border-[#777c84] bg-white flex items-center justify-center"><div className="w-px h-[8px] bg-[#777]" /></div>
      <svg className="w-[17px] h-[15px]" viewBox="0 0 17 15"><path d="M10 3v9L5 7.500z" fill="#4b5057" /></svg>
      <div className="w-[677px] rounded-[2px] border border-[#8f959e] border-t-0 bg-gradient-to-b from-[#f1f4f8] to-[#d6dae0] flex items-center justify-center gap-px">
        <div className="w-px h-[7px] bg-[#7a8088]" /><div className="w-px h-[7px] bg-[#7a8088]" /><div className="w-px h-[7px] bg-[#7a8088]" /><div className="w-px h-[7px] bg-[#7a8088]" />
      </div>
      <svg className="w-[50px] h-[15px]" viewBox="0 0 50 15"><path d="M39 3v9l5-4.500z" fill="#4b5057" /></svg>
      <div className="w-[8px] mr-[20px] border border-r-0 border-[#777c84] bg-white flex items-center justify-center"><div className="w-px h-[8px] bg-[#777]" /></div>
    </div>
  );
}

function StatusBar() {
  return (
    <div className="h-[21px] flex items-center bg-gradient-to-b from-[#eceef1] via-[#d5d8dc] to-[#b6babf] text-[#33373d]">
      <span className="ml-[8px] w-[47px]">Ready</span><span className="w-[57px]">Calculate</span><div className="w-px h-[19px] bg-[#9a9fa6]" />
      <svg className="ml-[8px] w-[16px] h-[14px]" viewBox="0 0 16 14"><rect x="2.500" y="1.500" width="13" height="12" fill="#fff" stroke="#4f78b8" /><path d="M3 3h12" stroke="#5c88d0" strokeWidth="3" /><path d="M4 7h10M4 9.500h10M4 12h10" stroke="#7fa3d8" /><circle cx="3.500" cy="3.500" r="3" fill="#d8402f" /></svg>
      <div className="ml-[10px] w-px h-[19px] bg-[#9a9fa6]" /><div className="flex-1" />
      <div className="w-px h-[19px] bg-[#9a9fa6]" />
      <div className="ml-[3px] w-[19px] h-[19px] rounded-[2px] border border-[#c2923a] bg-[#fcdc74] flex items-center justify-center"><svg className="w-[13px] h-[12px]" viewBox="0 0 13 12"><path d="M.5.5h12v11H.5zM4.500 0v12M8.500 0v12M0 4h13M0 8h13" fill="#fff" stroke="#555" /></svg></div>
      <svg className="ml-[2px] w-[14px] h-[13px]" viewBox="0 0 14 13"><rect x="1" y="1" width="12" height="11" fill="#fff" stroke="#666" strokeWidth="2" /><rect x="4" y="3" width="6" height="7" fill="none" stroke="#777" /><path d="M5 5.500h4M5 7.500h4" stroke="#777" /></svg>
      <svg className="ml-[5px] w-[14px] h-[13px]" viewBox="0 0 14 13"><path d="M.5.5h13v12H.5z" fill="#fff" stroke="#666" /><path d="M1 10h12M5 1v8M9 1v8" stroke="#666" strokeWidth="1.500" /></svg>
      <span className="ml-[11px] w-[36px]">100%</span>
      <svg className="w-[134px] h-[19px] mr-[2px]" viewBox="0 0 134 19"><path d="M14 9.500h112" stroke="#868c94" /><g fill="#f3f4f6" stroke="#6c7179"><circle cx="7.500" cy="9.500" r="6.500" /><circle cx="123.500" cy="9.500" r="6.500" /><path d="M62.500 3h7v8L66 15l-3.500-4z" /></g><path d="M4 9.500h7M120 9.500h7M123.500 6v7" stroke="#333" strokeWidth="1.600" /></svg>
    </div>
  );
}

const Task = ({ w, children, open, stack, bright }) => (
  <div className={"h-[39px] shrink-0 flex " + w}>
    <div className={"flex-1 flex items-center justify-center " + (open ? "rounded-[2px] border border-[#b9b3ab] outline outline-1 -outline-offset-2 outline-[#ffffff33] shadow-[0_0_0_1px_#2a2723] bg-gradient-to-br " + (bright ? "from-[#e4e2df] via-[#aaa49d] to-[#9b958d]" : "from-[#c4c0bb] via-[#7f776d] to-[#6d655b]") : "")}>{children}</div>
    {stack && <div className="w-[4px] border-r border-[#b9b3ab] bg-[#6e675f] ml-px" />}
  </div>
);
const Office = ({ l, c, d }) => (
  <svg className="w-[30px] h-[30px]" viewBox="0 0 30 30"><path d="M4 1h25v28H1V4z" fill="#fbfcfd" stroke={c} strokeWidth="1.600" /><path d="M14 3h13v13H14z" fill={c} opacity=".3" />
    <text x="2" y="21" fontFamily="Lato" fontWeight="900" fontSize="21" fill={d}>{l}</text>
    <path d="M10 22l15-5 4 6v6H12z" fill="#fff" stroke={c} strokeWidth=".8" /><path d="M13 24l11-4M14 27l12-4" stroke={c} strokeWidth="1" /></svg>
);
const ChromeIcon = ({ s }) => (
  <svg className={s} viewBox="0 0 30 30"><circle cx="15" cy="15" r="14" fill="#fdd835" /><path d="M15 15L2.900 8A14 14 0 0 1 27.100 8z" fill="#dd3b2c" /><path d="M2.900 8A14 14 0 0 0 15 29l6-10.500-6-3.500z" fill="#47a847" /><circle cx="15" cy="15" r="6.500" fill="#fff" /><circle cx="15" cy="15" r="5" fill="#3f7fe0" /></svg>
);

function Taskbar() {
  return (
    <div className="h-[40px] flex items-start border-t border-[#8b857d] overflow-hidden text-white bg-[linear-gradient(90deg,#3f3a33_0,#4b443b_180px,#5a5044_380px,#56525a_440px,#51483d_500px,#64594c_800px,#5f5548_940px,#54493f_956px,#6b5f52_975px,#75685b_1050px,#7f7b78_1068px,#959595_1076px,#a1a1a1_1200px,#9b9b9b_1264px,#6b7f9c_1272px,#a3a3a3_1282px,#9a9a9a_1500px,#777_1535px,#7c7c7c_1700px,#6d6d6d_1920px)]">
      <svg className="w-[38px] h-[38px] ml-[8px]" viewBox="0 0 38 38"><defs><radialGradient id="orb" cx=".5" cy=".9" r=".9"><stop offset="0" stopColor="#35c8f5" /><stop offset=".5" stopColor="#1b6596" /><stop offset="1" stopColor="#a6c2d2" /></radialGradient></defs>
        <circle cx="19" cy="19" r="17.500" fill="url(#orb)" stroke="#26404f" />
        <path d="M10 11c3-2 5-2 8 0l-2 8c-3-2-5-1-8 0z" fill="#ed6a35" /><path d="M20 11.500c3 2 5 2 8 0l-2 8c-3 2-5 1-8 0z" fill="#93c83e" /><path d="M8 21c3-2 5-1 8 0l-2 8c-3-2-5-1-8 0z" fill="#4ba5e6" /><path d="M17.500 21.500c3 2 5 2 8 0l-2 8c-3 2-5 1-8 0z" fill="#fdca3b" /></svg>
      <Task w="w-[58px] ml-[14px]" open><svg className="w-[34px] h-[34px]" viewBox="0 0 34 34"><path d="M2 6l3-3h8l2 3h15v24H2z" fill="#e6c766" /><path d="M5 4h6M14 6h8M23 8h7" stroke="#fff" strokeWidth="2.500" /><path d="M4 4h3" stroke="#2e9b3c" strokeWidth="2.500" /><path d="M14 6h3" stroke="#d64130" strokeWidth="2.500" /><path d="M22 8h4" stroke="#2e86d6" strokeWidth="2.500" /><path d="M1 11h32l-1 18H2z" fill="#fbe9a0" stroke="#d8b95a" /><path d="M7 32v-6c0-3 3-5 6-5h8c3 0 6 2 6 5v6h-5v-5H12v5z" fill="#a5d8f1" stroke="#5fa6cc" /></svg></Task>
      <Task w="w-[58px] ml-[3px]"><svg className="w-[28px] h-[28px]" viewBox="0 0 28 28"><path d="M13 3h12v21H13z" fill="#7db8dd" stroke="#d5ebf7" /><rect x="2" y="3" width="20" height="22" fill="#8cc0e0" stroke="#d5ebf7" /><circle cx="12" cy="14" r="8.500" fill="#f07e1c" stroke="#fff" /><path d="M9.500 9l7 5-7 5z" fill="#fff" /></svg></Task>
      <Task w="w-[58px] ml-[5px]"><svg className="w-[32px] h-[32px]" viewBox="0 0 32 32"><circle cx="17" cy="15" r="13" fill="#1f4f9c" /><path d="M15 3c7-2 12 3 13 8-4-3-7-1-9-3-2-1-1-4-4-5z" fill="#49a5de" /><path d="M3 5l4 4c3-2 6-1 8 0-4 1-4 4-2 6 3 0 6 1 7 3-2 0-4 2-7 2 4 5 12 3 13-5 1-5-1-8-3-10 5 2 8 7 8 12-1 8-7 14-15 14S1 25 1 17c0-5 1-9 2-12z" fill="#ec7a1f" /><path d="M25 6c4 3 6 8 5 13-2 6-7 10-12 10 6-3 10-9 8-16z" fill="#f7c52b" /></svg></Task>
      <Task w="w-[58px] ml-[3px]" open stack><Office l="W" c="#3f70bd" d="#1f4f9f" /></Task>
      <Task w="w-[58px] ml-[4px]" open><ChromeIcon s="w-[29px] h-[29px]" /></Task>
      <Task w="w-[58px] ml-[4px]"><Office l="P" c="#e0592d" d="#d24a1e" /></Task>
      <Task w="w-[58px] ml-[4px]"><svg className="w-[31px] h-[31px]" viewBox="0 0 31 31"><rect width="31" height="31" rx="3" fill="#1d4e74" /><path d="M5 26C3 18 4 11 5 5c5-2 9 1 12 5 3 3 5 6 5 9 1 2 3 3 5 5l-4 0 1 3c-3-3-7-6-9-11-2 1-2 3-3 5-1-3-3-4-4-6-1 4-1 8-3 11z" fill="none" stroke="#e6eff5" strokeWidth="1.200" /><path d="M21 4l5 5M26 3l1 4-3 0" stroke="#cfdde8" strokeWidth="2" fill="none" /></svg></Task>
      <Task w="w-[58px] ml-[5px]" open stack><svg className="w-[28px] h-[28px]" viewBox="0 0 28 28"><rect width="28" height="28" fill="#c00d0d" /><path d="M0 28L28 8v20z" fill="#8d0909" opacity=".6" /><path d="M5 23c3-3 8-9 9-16 0-3-3-3-2 0 1 6 6 11 11 11 3-1 0-3-4-2-5 0-10 2-14 5-2 2-1 4 0 2z" fill="none" stroke="#fff" strokeWidth="1.600" /></svg></Task>
      <Task w="w-[59px] ml-[3px]" open><svg className="w-[32px] h-[32px]" viewBox="0 0 32 32"><rect width="32" height="32" fill="#eff0f1" stroke="#888" /><path d="M11 15v14M4 22h14M8 6v8M4 10h8M14 2v8M10 6h8M19 10v8M15 14h8M21 3v7M17.500 6.500h7M27 2v6M24 5h6M23 21v8M19 25h8" stroke="#1f5580" strokeWidth="1.800" /></svg></Task>
      <Task w="w-[58px] ml-[3px]" open stack><svg className="w-[31px] h-[30px]" viewBox="0 0 31 30"><path d="M4 1h26v28H1V4z" fill="#fde6a2" stroke="#f2a51f" strokeWidth="2" /><text x="0" y="21" fontFamily="Lato" fontWeight="900" fontSize="22" fill="#e37d12">O</text><circle cx="23" cy="14" r="5.500" fill="#fff6dc" stroke="#e9a127" strokeWidth="1.500" /><path d="M23 11v3h3" stroke="#b9701a" fill="none" /><path d="M11 20l16-1 1 9H12z" fill="#fff" stroke="#f2b13a" /></svg></Task>
      <Task w="w-[58px] ml-[4px]" open stack><svg className="w-[33px] h-[33px]" viewBox="0 0 33 33"><circle cx="16.500" cy="16.500" r="16" fill="#3f82c4" /><path d="M2 14C4 4 28 0 31 13c-8-5-20-3-29 1z" fill="#7fb2e0" opacity=".6" /><text x="6" y="23" fontFamily="Open Sans" fontSize="19" fill="#fff">Σ</text><text x="20" y="17" fontFamily="Open Sans" fontSize="12" fontWeight="bold" fill="#fff">α</text><path d="M23.500 21v7M20 24.500h7" stroke="#fff" strokeWidth="1.800" /></svg></Task>
      <Task w="w-[58px] ml-[4px]" open bright><Office l="X" c="#3ea045" d="#2a7a33" /></Task>
      <div className="flex-1" />
      <div className="flex items-center h-[40px] gap-[8px]">
        <svg className="w-[16px] h-[16px]" viewBox="0 0 16 16"><path d="M2 1h11v10l-5 4-6-4z" fill="#f1cf6a" stroke="#a9812a" /><path d="M5.500 1v9M9.500 1v9" stroke="#a9812a" /><circle cx="12" cy="12" r="3.500" fill="#2da33a" /></svg>
        <svg className="w-[16px] h-[16px]" viewBox="0 0 16 16"><circle cx="9" cy="7.500" r="7" fill="#222" stroke="#d9a91f" strokeWidth="1.500" /><path d="M6 2c2 3 2 7 1 11M10 2c3 3 3 7 2 10" stroke="#e6bb36" fill="none" strokeWidth="1.300" /><rect x="0" y="8" width="9" height="8" fill="#2b8c2f" /><rect x="2.500" y="11" width="4" height="3" fill="#fff" /><path d="M3 11c0-2.500 3-2.500 3 0" stroke="#fff" fill="none" /></svg>
        <svg className="w-[16px] h-[16px]" viewBox="0 0 16 16"><rect width="16" height="16" fill="#d5e2d3" /><rect width="8" height="8" fill="#4f9461" /><rect x="8" width="8" height="8" fill="#9ac4a0" /><rect y="8" width="8" height="8" fill="#82b48c" /><circle cx="11" cy="11" r="4.500" fill="#fff" /><path d="M9 9l4 4M13 9l-4 4" stroke="#d62222" strokeWidth="2" /></svg>
        <svg className="w-[16px] h-[16px]" viewBox="0 0 16 16"><path d="M2 12.500c2-2 2-3 2-6 0-5 8-5 8 0 0 3 0 4 2 6zM6.500 14h3M8 .5V2" fill="none" stroke="#3d3d3d" strokeWidth="1.300" /></svg>
        <ChromeIcon s="w-[16px] h-[16px]" />
        <svg className="w-[16px] h-[16px]" viewBox="0 0 16 16"><path d="M5.500 1h5L16 10h-5z" fill="#f8cd2f" /><path d="M5.500 1L0 10.500 2.500 15 8 5.500z" fill="#1f9d5b" /><path d="M5.500 10.500H16L13.500 15H2.500z" fill="#3f7fe6" /></svg>
        <svg className="w-[16px] h-[16px]" viewBox="0 0 16 16"><rect x=".5" y=".5" width="15" height="15" fill="#f5b62b" stroke="#fff2cd" /><ellipse cx="8" cy="8" rx="2.800" ry="4" fill="#fff5d8" stroke="#c97b10" strokeWidth="2" /></svg>
        <svg className="w-[16px] h-[16px]" viewBox="0 0 16 16"><path d="M4.500 1L8 3.500 4.500 6 1 3.500zM11.500 1L15 3.500 11.500 6 8 3.500zM4.500 6L8 8.500 4.500 11 1 8.500zM11.500 6L15 8.500 11.500 11 8 8.500zM8 9.500l3 2.500-3 2-3-2z" fill="#fff" stroke="#333" strokeWidth=".7" /><circle cx="12" cy="12" r="4" fill="#dd2a2a" /><path d="M10.300 10.300l3.400 3.400M13.700 10.300l-3.400 3.400" stroke="#fff" strokeWidth="1.200" /></svg>
        <svg className="w-[16px] h-[16px]" viewBox="0 0 16 16"><circle cx="8" cy="8" r="7.500" fill="#1d4fc0" stroke="#cfe0ff" /><path d="M3.500 9.500v-5h8" fill="none" stroke="#fff" strokeWidth="1.300" /><rect x="5.500" y="6.500" width="7" height="5" fill="#1d4fc0" stroke="#fff" /><path d="M5.500 7.500h7" stroke="#fff" /></svg>
        <svg className="w-[16px] h-[16px]" viewBox="0 0 16 16"><circle cx="8" cy="8.500" r="5" fill="#1ca0e8" /><circle cx="8" cy="8" r="1.800" fill="#d9f1fd" /><ellipse cx="8" cy="8" rx="8" ry="3.500" transform="rotate(-35 8 8)" fill="none" stroke="#4cc2f7" strokeWidth="1.200" /></svg>
        <svg className="w-[16px] h-[16px]" viewBox="0 0 16 16"><rect x="5.500" y="4.500" width="10" height="8" fill="#555" stroke="#fff" strokeWidth="1.500" /><path d="M6 15h9" stroke="#fff" strokeWidth="1.500" /><path d="M.5 1.500h4v4h-4zM2.500 6v8h3M1.500 0v2M3.500 0v2" stroke="#fff" fill="none" /></svg>
        <svg className="w-[16px] h-[16px]" viewBox="0 0 16 16"><path d="M1 5h3l4-4v14l-4-4H1z" fill="#f2f2f2" stroke="#555" strokeWidth=".6" /><circle cx="11.500" cy="11" r="4" fill="#fff" stroke="#e02323" strokeWidth="1.800" /><path d="M9 8.500l5 5" stroke="#e02323" strokeWidth="1.600" /></svg>
      </div>
      <div className="w-[82px] ml-[3px] h-[40px] flex flex-col items-center justify-center leading-[17px] text-[12px]"><span>2:57 PM</span><span>6/08/2015</span></div>
      <div className="w-[14px] ml-[-4px] h-[39px] mr-px border border-[#4a4a4a] bg-gradient-to-br from-[#b8b8b8] via-[#7f7f7f] to-[#8d8d8d]" />
    </div>
  );
}

export default function App() {
  return (
    <div className={"w-[1920px] h-[1080px] overflow-hidden flex flex-col " + UI}>
      <div className="h-[48px] bg-[radial-gradient(ellipse_120px_20px_at_1440px_0,#444_0,#44444400_100%),radial-gradient(ellipse_220px_24px_at_1600px_0,#4c4c4c_0,#4c4c4c00_100%),radial-gradient(ellipse_100px_20px_at_425px_0,#555_0,#55555500_100%),radial-gradient(ellipse_240px_22px_at_960px_0,#585858_0,#58585800_100%),linear-gradient(180deg,#858585_0,#a8a8a8_25%,#cfcfcf_50%,#eeeeee_80%,#f6f6f6_100%)]">
        <TitleBar />
        <TabBar />
      </div>
      <Ribbon />
      <div className="h-[5px] border-t border-b border-[#8b929c] bg-[#c3c7cd]" />
      <QuickAccess />
      <div className="h-[2px] bg-[#98a0aa]" />
      <FormulaBar />
      <div className="h-[5px] border-t border-b border-[#8b929c] bg-[#e6eaf0]" />
      <Sheet />
      <SheetTabs />
      <StatusBar />
      <div className="h-px bg-[#26292d]" />
      <Taskbar />
    </div>
  );
}
